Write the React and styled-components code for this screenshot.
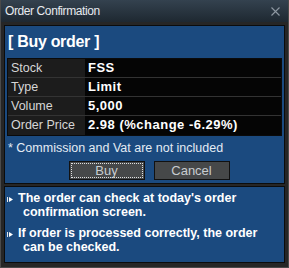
import React from 'react'
import styled, { createGlobalStyle } from 'styled-components'

const Global = createGlobalStyle`
  html, body { margin: 0; padding: 0; background: #2a2a2a; }
  * { box-sizing: border-box; }
`

const Window = styled.div`
  width: 289px;
  height: 268px;
  background: #262626;
  border: 1px solid #4a4a4a;
  border-top: none;
  display: flex;
  flex-direction: column;
  font-family: "Liberation Sans", Arial, sans-serif;
`

const TitleBar = styled.div`
  height: 22px;
  flex: none;
  display: flex;
  align-items: center;
  justify-content: space-between;
  padding: 0 8px 0 4px;
  background: linear-gradient(#34424f, #1e2831);
  color: #e6eaee;
  font-size: 12px;
  letter-spacing: -0.4px;
`

const Close = styled.svg`
  width: 9px;
  height: 9px;
`

const Body = styled.div`
  flex: 1;
  display: flex;
  flex-direction: column;
  gap: 2px;
  padding: 3px 3px 4px;
`

const Panel = styled.div`
  background: #1b4a7f;
  border: 1px solid #0c0c0c;
  height: ${({ h }) => h}px;
  flex: none;
  padding: ${({ pad }) => pad};
`

const Heading = styled.div`
  color: #ffffff;
  font-weight: bold;
  font-size: 16px;
  line-height: 20px;
  padding: 6px 0 0 1px;
  letter-spacing: -0.3px;
`

const Table = styled.div`
  margin-top: 6px;
  display: grid;
  grid-template-columns: 77px 1fr;
  border: 1px solid #0a0a0a;
  background: #050505;
`

const Label = styled.div`
  background: #1c1c1c;
  color: #d6d6d6;
  font-size: 12.5px;
  height: 19px;
  line-height: 18px;
  padding-left: 3px;
  border-bottom: ${({ last }) => (last ? 'none' : '1px solid #333')};
`

const Value = styled.div`
  color: #ffffff;
  font-weight: bold;
  font-size: 13px;
  letter-spacing: 0.5px;
  height: 19px;
  line-height: 18px;
  padding-left: 3px;
  border-bottom: ${({ last }) => (last ? 'none' : '1px solid #333')};
`

const Note = styled.div`
  color: #e4ecf4;
  font-size: 12.5px;
  margin-top: 5px;
  padding-left: 1px;
`

const Buttons = styled.div`
  display: flex;
  justify-content: center;
  gap: 9px;
  margin-top: 6px;
  padding-left: 9px;
`

const Button = styled.div`
  width: 76px;
  height: 19px;
  background: #464849;
  border: 1px solid #111;
  color: #c8ccd0;
  font-size: 13px;
  display: flex;
  align-items: center;
  justify-content: center;
  position: relative;
  &::after {
    content: '';
    display: ${({ focused }) => (focused ? 'block' : 'none')};
    position: absolute;
    inset: 1px;
    border: 1px dotted #e0e0e0;
  }
`

const Info = styled.div`
  display: flex;
  gap: 4px;
  color: #ffffff;
  font-weight: bold;
  font-size: 12.5px;
  line-height: 13.5px;
  margin-bottom: 8px;
`

const InfoText = styled.span`
  padding-left: 5px;
  text-indent: -5px;
`

const Bullet = styled.svg`
  flex: none;
  width: 7px;
  height: 7px;
  margin-top: 4px;
`

const rows = [
  ['Stock', 'FSS'],
  ['Type', 'Limit'],
  ['Volume', '5,000'],
  ['Order Price', '2.98 (%change -6.29%)'],
]

const notes = [
  "The order can check at today's order confirmation screen.",
  'If order is processed correctly, the order can be checked.',
]

const Arrow = () => (
  <Bullet viewBox="0 0 7 7">
    <rect x="0" y="1" width="1" height="5" fill="#e8e8e8" />
    <path d="M2 1 L6 3.5 L2 6 Z" fill="#ffffff" />
  </Bullet>
)

export default function App() {
  return (
    <>
      <Global />
      <Window>
        <TitleBar>
          Order Confirmation
          <Close viewBox="0 0 9 9">
            <path d="M0.5 0.5 L8.5 8.5 M8.5 0.5 L0.5 8.5" stroke="#8e98a2" strokeWidth="1.1" />
          </Close>
        </TitleBar>
        <Body>
          <Panel h={159} pad="0 2px">
            <Heading>[ Buy order ]</Heading>
            <Table>
              {rows.map(([l, v], i) => (
                <React.Fragment key={l}>
                  <Label last={i === rows.length - 1}>{l}</Label>
                  <Value last={i === rows.length - 1}>{v}</Value>
                </React.Fragment>
              ))}
            </Table>
            <Note>* Commission and Vat are not included</Note>
            <Buttons>
              <Button focused>Buy</Button>
              <Button>Cancel</Button>
            </Buttons>
          </Panel>
          <Panel h={77} pad="5px 10px 0 2px">
            {notes.map((n) => (
              <Info key={n}>
                <Arrow />
                <InfoText>{n}</InfoText>
              </Info>
            ))}
          </Panel>
        </Body>
      </Window>
    </>
  )
}
